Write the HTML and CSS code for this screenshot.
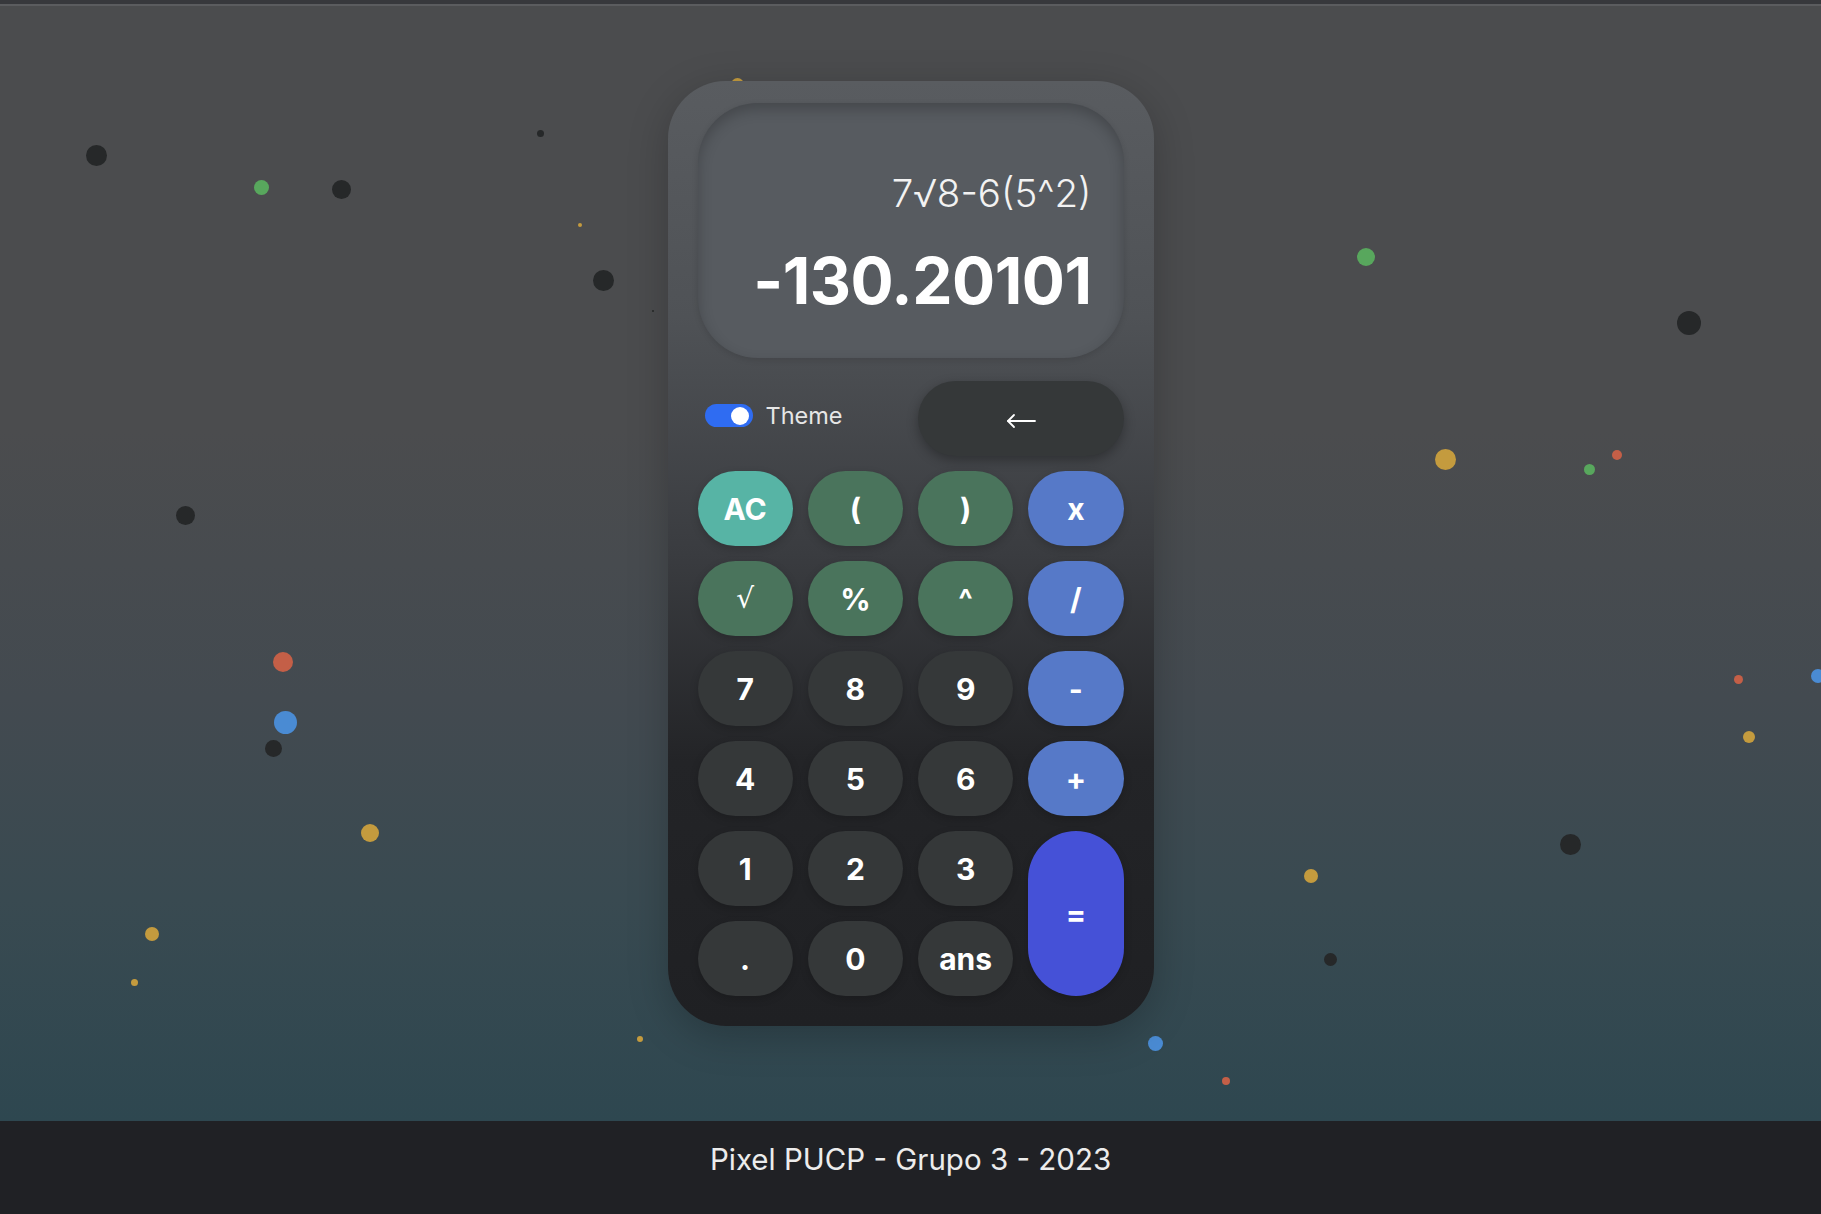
FILE: index.html
```html
<!DOCTYPE html>
<html lang="es">
<head>
<meta charset="utf-8">
<title>Calculadora - Pixel PUCP</title>
<link rel="stylesheet" href="styles.css">
</head>
<body>
<div class="topbar"></div>
<main class="stage">
  <div class="particles" aria-hidden="true">
    <span class="dot dark" style="left:86px;top:145px;width:21px;height:21px"></span>
    <span class="dot green" style="left:254px;top:180px;width:15px;height:15px"></span>
    <span class="dot dark" style="left:332px;top:180px;width:19px;height:19px"></span>
    <span class="dot dark" style="left:537px;top:130px;width:7px;height:7px"></span>
    <span class="dot yellow" style="left:578px;top:223px;width:4px;height:4px"></span>
    <span class="dot dark" style="left:593px;top:270px;width:21px;height:21px"></span>
    <span class="dot yellow" style="left:731px;top:78px;width:13px;height:13px"></span>
    <span class="dot dark" style="left:652px;top:310px;width:2px;height:2px"></span>
    <span class="dot green" style="left:1357px;top:248px;width:18px;height:18px"></span>
    <span class="dot dark" style="left:1677px;top:311px;width:24px;height:24px"></span>
    <span class="dot yellow" style="left:1435px;top:449px;width:21px;height:21px"></span>
    <span class="dot red" style="left:1612px;top:450px;width:10px;height:10px"></span>
    <span class="dot green" style="left:1584px;top:464px;width:11px;height:11px"></span>
    <span class="dot dark" style="left:176px;top:506px;width:19px;height:19px"></span>
    <span class="dot red" style="left:273px;top:652px;width:20px;height:20px"></span>
    <span class="dot blue" style="left:274px;top:711px;width:23px;height:23px"></span>
    <span class="dot dark" style="left:265px;top:740px;width:17px;height:17px"></span>
    <span class="dot yellow" style="left:361px;top:824px;width:18px;height:18px"></span>
    <span class="dot yellow" style="left:145px;top:927px;width:14px;height:14px"></span>
    <span class="dot yellow" style="left:131px;top:979px;width:7px;height:7px"></span>
    <span class="dot yellow" style="left:637px;top:1036px;width:6px;height:6px"></span>
    <span class="dot red" style="left:1734px;top:675px;width:9px;height:9px"></span>
    <span class="dot blue" style="left:1811px;top:669px;width:14px;height:14px"></span>
    <span class="dot yellow" style="left:1743px;top:731px;width:12px;height:12px"></span>
    <span class="dot dark" style="left:1560px;top:834px;width:21px;height:21px"></span>
    <span class="dot yellow" style="left:1304px;top:869px;width:14px;height:14px"></span>
    <span class="dot dark" style="left:1324px;top:953px;width:13px;height:13px"></span>
    <span class="dot blue" style="left:1148px;top:1036px;width:15px;height:15px"></span>
    <span class="dot red" style="left:1222px;top:1077px;width:8px;height:8px"></span>
  </div>

  <section class="calculator">
    <div class="display">
      <div class="expression">7√8-6(5^2)</div>
      <div class="result">-130.20101</div>
    </div>
    <div class="keys">
      <div class="theme">
        <span class="switch"><span class="knob"></span></span>
        <span class="theme-label">Theme</span>
      </div>
      <button class="key back" aria-label="Borrar">
        <svg class="arrow" width="30" height="16" viewBox="0 0 30 16" fill="none" stroke="#ffffff" stroke-width="1.8" stroke-linecap="round" stroke-linejoin="round">
          <path d="M29 8H2"/>
          <path d="M8 2L2 8l6 6"/>
        </svg>
      </button>

      <button class="key clear">AC</button>
      <button class="key fn">(</button>
      <button class="key fn">)</button>
      <button class="key op">x</button>

      <button class="key fn root">√</button>
      <button class="key fn">%</button>
      <button class="key fn">^</button>
      <button class="key op">/</button>

      <button class="key num">7</button>
      <button class="key num">8</button>
      <button class="key num">9</button>
      <button class="key op">-</button>

      <button class="key num">4</button>
      <button class="key num">5</button>
      <button class="key num">6</button>
      <button class="key op">+</button>

      <button class="key num">1</button>
      <button class="key num">2</button>
      <button class="key num">3</button>
      <button class="key equals">=</button>

      <button class="key num">.</button>
      <button class="key num">0</button>
      <button class="key num">ans</button>
    </div>
  </section>
</main>
<footer class="footer">Pixel PUCP - Grupo 3 - 2023</footer>
</body>
</html>
```
FILE: styles.css
```css
* { box-sizing: border-box; }

html, body {
  margin: 0;
  padding: 0;
}

body {
  background: #202125;
  font-family: Inter, "Noto Sans", sans-serif;
  color: #ffffff;
}

.topbar {
  height: 6px;
  background: #37383c;
  border-bottom: 2px solid #5b5c5f;
}

.stage {
  position: relative;
  height: 1115px;
  padding-top: 75px;
  display: flex;
  justify-content: center;
  align-items: flex-start;
  overflow: hidden;
  background: linear-gradient(180deg, #4b4c4e 0%, #4b4c4e 38%, #434a50 62%, #394a51 80%, #2e4750 100%);
}

.particles {
  position: absolute;
  inset: -6px 0 0 0;
  z-index: 0;
}

.dot {
  position: absolute;
  border-radius: 50%;
}
.dot.dark { background: #262829; }
.dot.green { background: #58a75d; }
.dot.yellow { background: #c49b3e; }
.dot.red { background: #c45f47; }
.dot.blue { background: #4a8bd3; }

.calculator {
  position: relative;
  z-index: 1;
  width: 486px;
  padding: 22px 30px 30px;
  border-radius: 58px;
  background: linear-gradient(180deg, #595c60 0%, #4f5256 25%, #3a3c40 50%, #232427 72%, #1f2023 100%);
  box-shadow: 0 10px 40px rgba(0, 0, 0, 0.22);
}

.display {
  height: 255px;
  border-radius: 60px;
  background: #575b60;
  box-shadow: inset 0 6px 14px rgba(0, 0, 0, 0.22), 0 2px 6px rgba(0, 0, 0, 0.12);
  display: flex;
  flex-direction: column;
  justify-content: flex-end;
  align-items: flex-end;
  padding: 0 32px 45px;
}

.expression {
  font-family: Inter, "Noto Sans", sans-serif;
  font-weight: 300;
  font-size: 38.5px;
  line-height: 38px;
  color: #f2f2f2;
  margin-bottom: 37px;
  white-space: nowrap;
}

.result {
  font-family: Inter, sans-serif;
  font-weight: 700;
  font-size: 64px;
  line-height: 64px;
  letter-spacing: -0.5px;
  color: #ffffff;
  white-space: nowrap;
}

.keys {
  margin-top: 23px;
  display: grid;
  grid-template-columns: repeat(4, 1fr);
  grid-auto-rows: 75px;
  gap: 15px;
}

.theme {
  grid-column: span 2;
  display: flex;
  align-items: center;
  gap: 13px;
  padding-left: 7px;
  padding-bottom: 6px;
}

.switch {
  position: relative;
  width: 48px;
  height: 23px;
  border-radius: 12px;
  background: #2f6cf2;
}

.knob {
  position: absolute;
  right: 4px;
  top: 2.5px;
  width: 18px;
  height: 18px;
  border-radius: 50%;
  background: #ffffff;
}

.theme-label {
  font-family: Inter, sans-serif;
  font-size: 23.5px;
  color: #e6e6e6;
}

.key {
  border: none;
  border-radius: 999px;
  color: #ffffff;
  font-family: Inter, sans-serif;
  font-weight: 700;
  font-size: 30px;
  display: flex;
  align-items: center;
  justify-content: center;
  padding: 0;
  box-shadow: 0 3px 8px rgba(0, 0, 0, 0.18);
  cursor: pointer;
}

.back {
  grid-column: span 2;
  background: #353839;
  box-shadow: 0 4px 12px rgba(0, 0, 0, 0.3);
  padding-top: 4px;
}

.arrow { display: block; }

.clear { background: #57b4a5; }
.fn { background: #4a745c; }
.op { background: #5679c8; }
.num { background: #353839; }
.equals {
  grid-row: span 2;
  background: #4551d7;
}

.root {
  font-family: "DejaVu Serif", serif;
  font-weight: 400;
  font-size: 28px;
}

.footer {
  height: 99px;
  padding-top: 21px;
  text-align: center;
  background: #202125;
  color: #ececec;
  font-family: Inter, sans-serif;
  font-size: 29.5px;
  line-height: 34px;
}
```
